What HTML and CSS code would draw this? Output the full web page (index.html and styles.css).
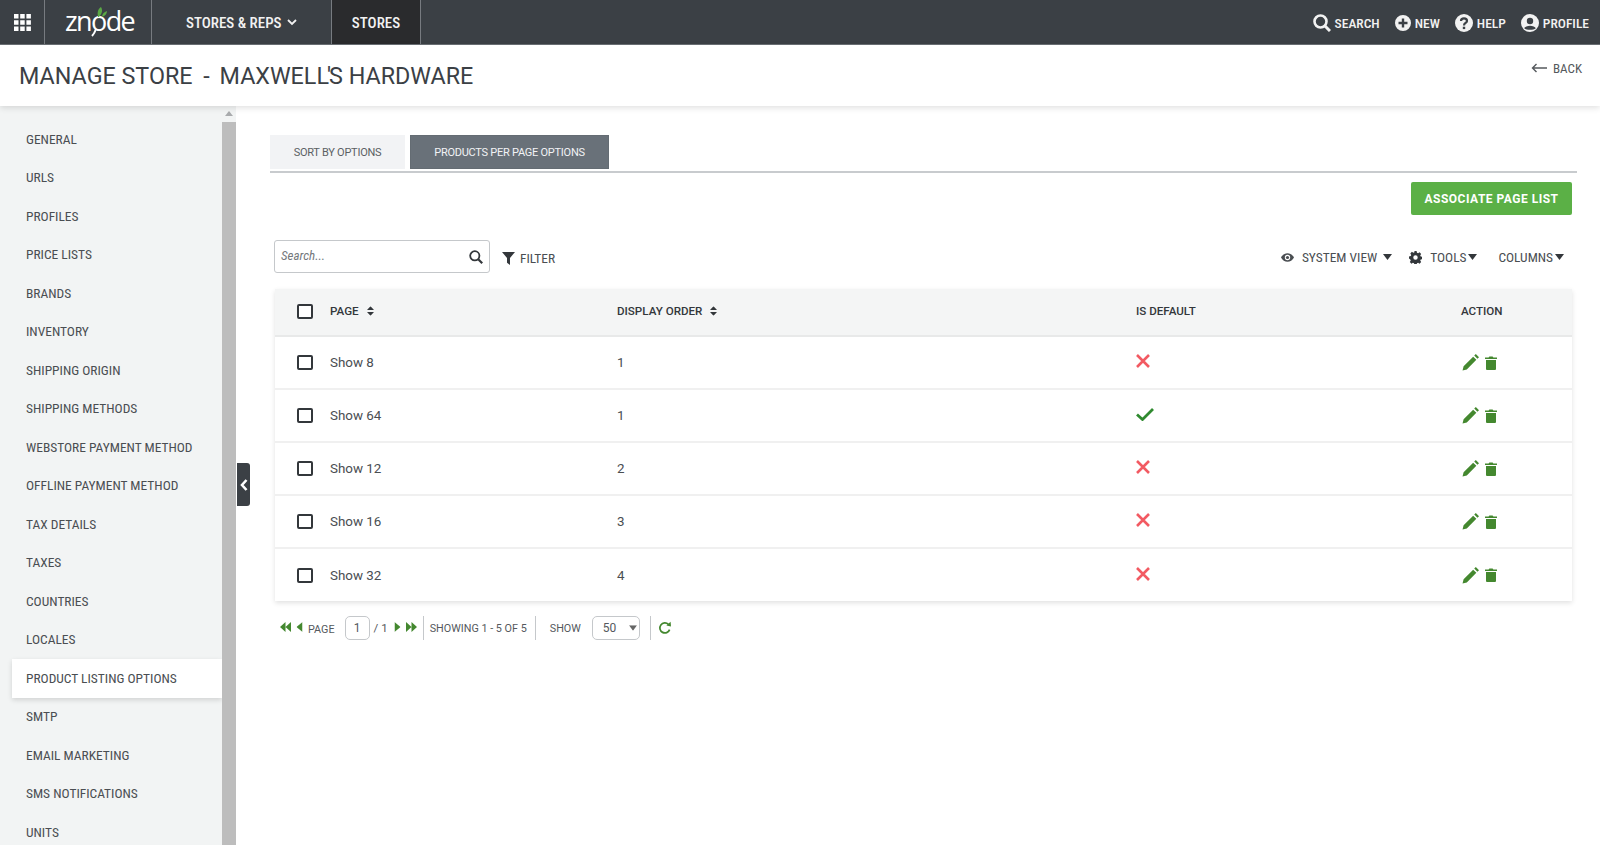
FILE: index.html
```html
<!DOCTYPE html>
<html lang="en">
<head>
<meta charset="utf-8">
<title>Manage Store</title>
<link rel="stylesheet" href="styles.css">
</head>
<body>
<svg class="defs" width="0" height="0" aria-hidden="true">
  <symbol id="i-pencil" viewBox="0 0 16 16"><path d="M0.5 15.5 L1.5 11.5 L10.5 2.5 L13.5 5.5 L4.5 14.5 Z M11.5 1.5 L13 0 L16 3 L14.5 4.5 Z"/></symbol>
  <symbol id="i-trash" viewBox="0 0 12 14"><path d="M1 4 H11 V13 Q11 14 10 14 H2 Q1 14 1 13 Z M0 1.6 H3.6 L4.4 .4 H7.6 L8.4 1.6 H12 V3 H0 Z"/></symbol>
  <symbol id="i-x" viewBox="0 0 14 14"><path d="M1 1 L13 13 M13 1 L1 13" fill="none" stroke="currentColor" stroke-width="2.6"/></symbol>
  <symbol id="i-check" viewBox="0 0 18 13"><path d="M1 6.5 L6.5 11.5 L17 1" fill="none" stroke="currentColor" stroke-width="2.8"/></symbol>
  <symbol id="i-sort" viewBox="0 0 8 11"><path d="M4 0 L8 4.4 H0 Z M0 6.6 H8 L4 11 Z"/></symbol>
  <symbol id="i-caret" viewBox="0 0 9 6"><path d="M0 0 H9 L4.5 6 Z"/></symbol>
  <symbol id="i-first" viewBox="0 0 11 10"><path d="M5.5 0 V10 L0 5 Z M11 0 V10 L5.5 5 Z"/></symbol>
  <symbol id="i-prev" viewBox="0 0 6 10"><path d="M6 0 V10 L0 5 Z"/></symbol>
  <symbol id="i-next" viewBox="0 0 6 10"><path d="M0 0 V10 L6 5 Z"/></symbol>
  <symbol id="i-last" viewBox="0 0 11 10"><path d="M0 0 V10 L5.5 5 Z M5.5 0 V10 L11 5 Z"/></symbol>
</svg>

<header class="topbar">
  <div class="cell cell-apps">
    <svg class="apps" viewBox="0 0 17 17"><path d="M0 0h4.5v4.5H0zM6.2 0h4.5v4.5H6.2zM12.4 0h4.5v4.5h-4.5zM0 6.2h4.5v4.5H0zM6.2 6.2h4.5v4.5H6.2zM12.4 6.2h4.5v4.5h-4.5zM0 12.4h4.5v4.5H0zM6.2 12.4h4.5v4.5H6.2zM12.4 12.4h4.5v4.5h-4.5z"/></svg>
  </div>
  <div class="cell cell-logo">
    <span class="logo">znode</span>
    <svg class="leaf" viewBox="0 0 10 10"><path d="M1 10 C0 5 1 2 4 0 C6 3 5 7 2 10 Z M5 10 C5 7 7 5 10 4 C10 7 8 9 5 10 Z"/></svg>
    <svg class="tail" viewBox="0 0 6 8"><path d="M5 0 C4 3 3 5 1 7" fill="none" stroke="currentColor" stroke-width="2"/></svg>
  </div>
  <div class="cell cell-menu">STORES &amp; REPS
    <svg class="chev" viewBox="0 0 10 7"><path d="M1 1 L5 5 L9 1" fill="none" stroke="currentColor" stroke-width="1.8"/></svg>
  </div>
  <div class="cell cell-active">STORES</div>
  <nav class="toplinks">
    <a class="toplink">
      <svg class="ic-search" viewBox="0 0 18 18"><circle cx="7.5" cy="7.5" r="6" fill="none" stroke="currentColor" stroke-width="2.6"/><path d="M12 12 L17 17" stroke="currentColor" stroke-width="3"/></svg>SEARCH</a>
    <a class="toplink">
      <svg class="ic-round" viewBox="0 0 16 16"><path fill-rule="evenodd" d="M8 0a8 8 0 1 0 0 16A8 8 0 0 0 8 0zM6.8 3.5h2.4v3.3h3.3v2.4H9.2v3.3H6.8V9.2H3.5V6.8h3.3z"/></svg>NEW</a>
    <a class="toplink">
      <svg class="ic-help" viewBox="0 0 18 18"><circle cx="9" cy="9" r="9" fill="currentColor"/><path d="M6 7 C6 3.5 12 3.5 12 7 C12 9 9 9 9 11.5" fill="none" stroke="#3b4045" stroke-width="2.2"/><rect x="7.8" y="12.7" width="2.4" height="2.4" fill="#3b4045"/></svg>HELP</a>
    <a class="toplink">
      <svg class="ic-help" viewBox="0 0 18 18"><circle cx="9" cy="9" r="9" fill="currentColor"/><circle cx="9" cy="7" r="3.2" fill="#3b4045"/><path d="M3.2 14.2 C4.5 10.8 13.5 10.8 14.8 14.2 C12.5 16.4 5.5 16.4 3.2 14.2 Z" fill="#3b4045"/></svg>PROFILE</a>
  </nav>
</header>

<section class="titlebar">
  <h1 class="title">MANAGE STORE <span class="dash">-</span> MAXWELL<span class="apos">'</span>S HARDWARE</h1>
  <a class="back"><svg class="back-arrow" viewBox="0 0 16 10"><path d="M16 5 H1.5 M5.5 1 L1.5 5 L5.5 9" fill="none" stroke="currentColor" stroke-width="1.4"/></svg>BACK</a>
</section>

<div class="body">
  <aside class="sidebar">
    <ul class="side-list">
      <li class="side-item">GENERAL</li>
      <li class="side-item">URLS</li>
      <li class="side-item">PROFILES</li>
      <li class="side-item">PRICE LISTS</li>
      <li class="side-item">BRANDS</li>
      <li class="side-item">INVENTORY</li>
      <li class="side-item">SHIPPING ORIGIN</li>
      <li class="side-item">SHIPPING METHODS</li>
      <li class="side-item">WEBSTORE PAYMENT METHOD</li>
      <li class="side-item">OFFLINE PAYMENT METHOD</li>
      <li class="side-item">TAX DETAILS</li>
      <li class="side-item">TAXES</li>
      <li class="side-item">COUNTRIES</li>
      <li class="side-item">LOCALES</li>
      <li class="side-item side-active">PRODUCT LISTING OPTIONS</li>
      <li class="side-item">SMTP</li>
      <li class="side-item">EMAIL MARKETING</li>
      <li class="side-item">SMS NOTIFICATIONS</li>
      <li class="side-item">UNITS</li>
    </ul>
    <div class="scrollbar">
      <svg class="scroll-up" viewBox="0 0 8 5"><path d="M4 0 L8 5 H0 Z"/></svg>
      <div class="scroll-thumb"></div>
    </div>
    <div class="collapse"><svg viewBox="0 0 8 12"><path d="M6.5 1 L2 6 L6.5 11" fill="none" stroke="currentColor" stroke-width="2.6"/></svg></div>
  </aside>

  <main class="main">
    <div class="tabs">
      <a class="tab">SORT BY OPTIONS</a>
      <a class="tab tab-on">PRODUCTS PER PAGE OPTIONS</a>
    </div>
    <div class="actions"><button class="btn">ASSOCIATE PAGE LIST</button></div>
    <div class="toolbar">
      <div class="searchbox">
        <span class="placeholder">Search...</span>
        <svg class="sb-icon" viewBox="0 0 14 14"><circle cx="5.8" cy="5.8" r="4.6" fill="none" stroke="currentColor" stroke-width="1.8"/><path d="M9.2 9.2 L13.2 13.2" stroke="currentColor" stroke-width="2.2"/></svg>
      </div>
      <a class="filter"><svg class="filter-ic" viewBox="0 0 14 14"><path d="M0 0 H14 L8.6 6.4 V14 L5.4 11.6 V6.4 Z"/></svg>FILTER</a>
      <div class="tools">
        <a class="tool tool-view"><svg class="eye" viewBox="0 0 14 9"><path fill-rule="evenodd" d="M0 4.5 C3 -1.5 11 -1.5 14 4.5 C11 10.5 3 10.5 0 4.5 Z M7 1.6 A2.9 2.9 0 1 0 7 7.4 A2.9 2.9 0 1 0 7 1.6 Z"/><circle cx="7" cy="4.5" r="1.7"/></svg>SYSTEM VIEW<svg class="caret caret-wide" viewBox="0 0 9 6"><use href="#i-caret"/></svg></a>
        <a class="tool tool-tools"><svg class="gear" viewBox="0 0 14 14"><path fill-rule="evenodd" d="M5.8 0h2.4l.4 1.9 1.2.5 1.6-1 1.7 1.7-1 1.6.5 1.2 1.9.4v2.4l-1.9.4-.5 1.2 1 1.6-1.7 1.7-1.6-1-1.2.5-.4 1.9H5.8l-.4-1.9-1.2-.5-1.6 1-1.7-1.7 1-1.6-.5-1.2L0 8.2V5.8l1.9-.4.5-1.2-1-1.6 1.7-1.7 1.6 1 1.2-.5zM7 4.6a2.4 2.4 0 1 0 0 4.8 2.4 2.4 0 0 0 0-4.8z"/></svg>TOOLS<svg class="caret" viewBox="0 0 9 6"><use href="#i-caret"/></svg></a>
        <a class="tool tool-cols">COLUMNS<svg class="caret" viewBox="0 0 9 6"><use href="#i-caret"/></svg></a>
      </div>
    </div>

    <table class="grid">
      <thead>
        <tr>
          <th class="c-check"><span class="box"></span></th>
          <th class="c-page">PAGE<svg class="sort" viewBox="0 0 8 11"><use href="#i-sort"/></svg></th>
          <th class="c-order">DISPLAY ORDER<svg class="sort" viewBox="0 0 8 11"><use href="#i-sort"/></svg></th>
          <th class="c-default">IS DEFAULT</th>
          <th class="c-action">ACTION</th>
        </tr>
      </thead>
      <tbody>
        <tr>
          <td class="c-check"><span class="box"></span></td><td>Show 8</td><td>1</td>
          <td><svg class="mark-x" viewBox="0 0 14 14"><use href="#i-x"/></svg></td>
          <td class="acts"><svg class="pencil" viewBox="0 0 16 16"><use href="#i-pencil"/></svg><svg class="trash" viewBox="0 0 12 14"><use href="#i-trash"/></svg></td>
        </tr>
        <tr>
          <td class="c-check"><span class="box"></span></td><td>Show 64</td><td>1</td>
          <td><svg class="mark-ok" viewBox="0 0 18 13"><use href="#i-check"/></svg></td>
          <td class="acts"><svg class="pencil" viewBox="0 0 16 16"><use href="#i-pencil"/></svg><svg class="trash" viewBox="0 0 12 14"><use href="#i-trash"/></svg></td>
        </tr>
        <tr>
          <td class="c-check"><span class="box"></span></td><td>Show 12</td><td>2</td>
          <td><svg class="mark-x" viewBox="0 0 14 14"><use href="#i-x"/></svg></td>
          <td class="acts"><svg class="pencil" viewBox="0 0 16 16"><use href="#i-pencil"/></svg><svg class="trash" viewBox="0 0 12 14"><use href="#i-trash"/></svg></td>
        </tr>
        <tr>
          <td class="c-check"><span class="box"></span></td><td>Show 16</td><td>3</td>
          <td><svg class="mark-x" viewBox="0 0 14 14"><use href="#i-x"/></svg></td>
          <td class="acts"><svg class="pencil" viewBox="0 0 16 16"><use href="#i-pencil"/></svg><svg class="trash" viewBox="0 0 12 14"><use href="#i-trash"/></svg></td>
        </tr>
        <tr>
          <td class="c-check"><span class="box"></span></td><td>Show 32</td><td>4</td>
          <td><svg class="mark-x" viewBox="0 0 14 14"><use href="#i-x"/></svg></td>
          <td class="acts"><svg class="pencil" viewBox="0 0 16 16"><use href="#i-pencil"/></svg><svg class="trash" viewBox="0 0 12 14"><use href="#i-trash"/></svg></td>
        </tr>
      </tbody>
    </table>

    <div class="pager">
      <svg class="pg-dbl" viewBox="0 0 11 10"><use href="#i-first"/></svg>
      <svg class="pg-one" viewBox="0 0 6 10"><use href="#i-prev"/></svg>
      <span class="pg-label">PAGE</span>
      <span class="pg-input">1</span>
      <span class="pg-of">/ 1</span>
      <svg class="pg-one" viewBox="0 0 6 10"><use href="#i-next"/></svg>
      <svg class="pg-dbl" viewBox="0 0 11 10"><use href="#i-last"/></svg>
      <span class="pg-sep"></span>
      <span class="pg-text pg-showing">SHOWING 1 - 5 OF 5</span>
      <span class="pg-sep"></span>
      <span class="pg-text pg-show">SHOW</span>
      <span class="pg-select">50<svg class="pg-caret" viewBox="0 0 9 6"><use href="#i-caret"/></svg></span>
      <span class="pg-sep"></span>
      <svg class="pg-refresh" viewBox="0 0 14 14"><path d="M11.6 8.6 A5 5 0 1 1 10.4 3.4" fill="none" stroke="currentColor" stroke-width="1.7"/><path d="M8.4 4.6 L13 5.4 L12.6 .8 Z"/></svg>
    </div>
  </main>
</div>
</body>
</html>
```

FILE: styles.css
```css
* { box-sizing: border-box; }
html, body { margin: 0; height: 100%; }
body {
  width: 1600px;
  height: 845px;
  overflow: hidden;
  display: flex;
  flex-direction: column;
  background: #fff;
  font-family: Roboto, "Liberation Sans", sans-serif;
  color: #3b4045;
}
.defs { position: absolute; }

/* top bar */
.topbar {
  height: 45px;
  flex: none;
  display: flex;
  align-items: stretch;
  background: #3b4045;
  border-bottom: 1px solid #6b7075;
  color: #f2f2f2;
  font-size: 14px;
  font-weight: 500;
}
.cell { display: flex; align-items: center; border-right: 1px solid #777b80; padding-top: 1px; }
.cell-apps { width: 45px; justify-content: center; }
.apps { width: 17px; height: 17px; fill: #fff; }
.cell-logo { width: 107px; padding-left: 20px; position: relative; }
.logo { font-family: "Open Sans", sans-serif; font-size: 27px; font-weight: 400; letter-spacing: -1.6px; color: #fff; line-height: 1; position: relative; top: -2px; }
.leaf { position: absolute; left: 52px; top: 7px; width: 10px; height: 10px; fill: #5aa845; }
.tail { position: absolute; left: 46px; top: 29px; width: 6px; height: 8px; color: #fff; }
.cell-menu { width: 180px; padding-left: 34px; font-size: 15px; font-stretch: 85%; }
.chev { width: 10px; height: 7px; margin-left: 5px; }
.cell-active { width: 89px; justify-content: center; background: #2a2b2d; font-size: 15px; font-stretch: 85%; }
.toplinks { margin-left: auto; display: flex; align-items: center; gap: 15px; padding: 1px 11px 0 0; font-size: 13.5px; font-stretch: 85%; }
.toplink { display: flex; align-items: center; gap: 4px; }
.ic-search { width: 18px; height: 18px; }
.ic-round { width: 16px; height: 16px; fill: currentColor; }
.ic-help { width: 18px; height: 18px; }

/* title */
.titlebar {
  height: 61px;
  flex: none;
  display: flex;
  justify-content: space-between;
  background: #fff;
  box-shadow: 0 2px 6px rgba(0,0,0,.12);
  position: relative;
  z-index: 2;
  padding: 0 18px 0 19px;
}
.title { margin: 17px 0 0; font-size: 23.3px; font-weight: 400; line-height: 28px; color: #3b4045; }
.dash { margin: 0 4px 0 5px; }
.apos { margin: 0 -2px; }
.back { display: flex; align-items: center; gap: 6px; height: 16px; margin-top: 15px; font-size: 13px; font-stretch: 85%; color: #55595d; }
.back-arrow { width: 16px; height: 10px; }

/* page body */
.body { flex: 1; display: flex; min-height: 0; }
.sidebar { width: 236px; flex: none; display: flex; position: relative; background: #f2f4f4; }
.side-list { list-style: none; margin: 0; padding: 14px 0 0 12px; flex: 1; overflow: hidden; }
.side-item {
  height: 38.5px;
  display: flex;
  align-items: center;
  padding-left: 14px;
  font-size: 13.45px;
  font-stretch: 85%;
  color: #4a4e52;
  white-space: nowrap;
}
.side-active { background: #fff; box-shadow: 0 2px 5px rgba(0,0,0,.14); }
.scrollbar { width: 14px; flex: none; background: #f2f4f4; display: flex; flex-direction: column; align-items: stretch; }
.scroll-up { width: 8px; height: 5px; fill: #a9abad; margin: 5px 0 0 3px; flex: none; }
.scroll-thumb { flex: 1; margin-top: 6px; background: #bdbdbd; }
.collapse {
  position: absolute;
  left: 237px;
  top: 357px;
  width: 13px;
  height: 43px;
  background: #3b4045;
  border-radius: 0 3px 3px 0;
  color: #fff;
  display: flex;
  align-items: center;
  justify-content: center;
}
.collapse svg { width: 8px; height: 12px; }

/* main */
.main { flex: 1; padding: 29px 23px 0 34px; min-width: 0; }
.tabs { display: flex; gap: 5px; height: 38px; border-bottom: 2px solid #c8cbce; }
.tab { height: 34px; display: flex; align-items: center; justify-content: center; font-size: 11px; letter-spacing: -.25px; background: #f2f3f5; color: #5b5f63; }
.tab:first-child { width: 135px; }
.tab-on { width: 199px; background: #697179; color: #f2f3f5; border: 1px solid #646c73; }
.actions { display: flex; justify-content: flex-end; padding: 9px 5px 0 0; }
.btn { width: 161px; height: 33px; border: 0; border-radius: 2px; background: #5bb046; color: #fff; font-family: inherit; font-size: 12px; font-weight: 700; letter-spacing: .5px; padding: 0; }
.toolbar { display: flex; align-items: center; margin: 25px 0 0 4px; height: 33px; padding-right: 13px; font-size: 13.4px; font-stretch: 85%; }
.searchbox { width: 216px; height: 33px; border: 1px solid #c5c8cb; border-radius: 3px; display: flex; align-items: center; justify-content: space-between; padding: 0 6px; }
.placeholder { font-style: italic; font-size: 13px; color: #74787c; padding-bottom: 2px; }
.sb-icon { width: 14px; height: 14px; color: #33373b; }
.filter { display: flex; align-items: center; gap: 5px; margin-left: 12px; padding-top: 4px; color: #4a4e52; }
.filter-ic { width: 13px; height: 13px; fill: #33373b; }
.tools { margin-left: auto; display: flex; align-items: center; color: #4a4e52; padding-top: 1px; }
.tool { display: flex; align-items: center; }
.tool-tools { margin-left: 17px; }
.tool-cols { margin-left: 21px; }
.eye { width: 13px; height: 9px; fill: #4a4e52; margin-right: 8px; }
.gear { width: 13px; height: 13px; fill: #33373b; margin-right: 8px; }
.caret { width: 9px; height: 6px; fill: #33373b; margin-left: 2px; }
.caret-wide { margin-left: 6px; }

/* table */
.grid {
  width: 1297px;
  margin: 16px 0 0 5px;
  border-collapse: collapse;
  table-layout: fixed;
  box-shadow: 0 2px 5px rgba(0,0,0,.12);
  font-size: 13.4px;
}
.grid th { height: 47px; background: #f4f5f5; border-bottom: 2px solid #e8e9e9; text-align: left; font-size: 11.6px; font-weight: 500; color: #33373b; padding: 0 0 2px; }
.grid td { height: 53px; border-bottom: 2px solid #f0f0f0; padding: 0; color: #4a4e52; }
.grid tbody tr:last-child td { border-bottom: 0; }
.c-check { width: 55px; padding-left: 22px !important; }
.c-page { width: 287px; }
.c-order { width: 519px; }
.c-default { width: 325px; }
.box { display: block; width: 16px; height: 15px; border: 2px solid #33373b; border-radius: 2px; background: #fff; }
.sort { width: 7px; height: 10px; margin-left: 8px; fill: #33373b; vertical-align: -1px; }
.mark-x { width: 14px; height: 14px; color: #f25a62; display: block; margin-bottom: 3px; }
.mark-ok { width: 18px; height: 13px; color: #2f8a2f; display: block; margin-bottom: 2px; }
.acts { padding-left: 1px !important; }
.pencil { width: 17px; height: 17px; fill: #44882f; vertical-align: middle; }
.trash { width: 12px; height: 14px; fill: #44882f; vertical-align: middle; margin-left: 6px; }

/* pager */
.pager { display: flex; align-items: center; height: 28px; margin: 13px 0 0 10px; font-size: 10.8px; color: #55595d; }
.pg-dbl { width: 11px; height: 10px; fill: #44882f; margin-bottom: 2px; }
.pg-one { width: 7px; height: 10px; fill: #44882f; margin: 0 5px 2px; }
.pg-label { margin-left: 0; padding-top: 2px; }
.pg-input { width: 25px; height: 24px; margin-left: 10px; border: 1px solid #c5c8cb; border-radius: 5px; display: flex; align-items: center; justify-content: center; font-size: 12px; }
.pg-of { margin: 0 1px 0 4px; font-size: 11.5px; }
.pg-sep { width: 1px; height: 24px; background: #c5c8cb; margin: 0 6px; }
.pg-showing { margin-right: 2px; }
.pg-show { margin-left: 8px; margin-right: 6px; }
.pg-select { width: 48px; height: 24px; margin-left: 5px; border: 1px solid #c5c8cb; border-radius: 5px; display: flex; align-items: center; justify-content: space-between; padding: 0 2px 0 10px; font-size: 12px; margin-right: 4px; }
.pg-caret { width: 8px; height: 6px; fill: #666; }
.pg-refresh { width: 14px; height: 14px; margin-left: 1px; color: #44882f; fill: #44882f; }
```
